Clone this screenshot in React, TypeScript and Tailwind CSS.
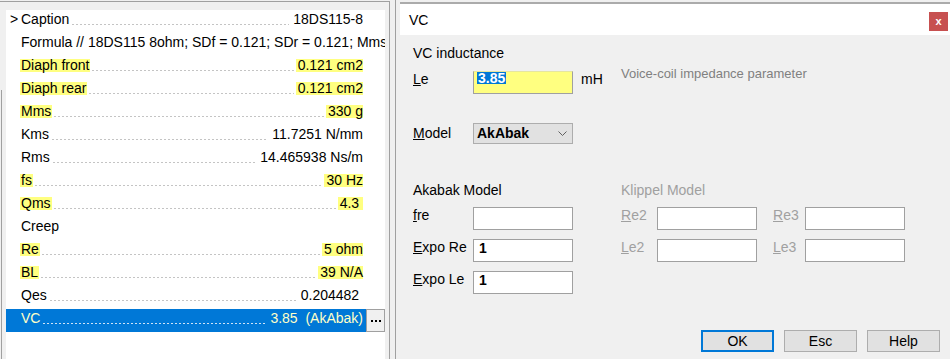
import React from 'react';

type Row = {
  label: string;
  value?: string;
  hl?: boolean;
  marker?: boolean;
  full?: boolean;
  sel?: boolean;
};

const rows: Row[] = [
  { label: 'Caption', value: '18DS115-8', marker: true },
  {
    label: 'Formula // 18DS115 8ohm; SDf = 0.121; SDr = 0.121; Mms = 330 g; Kms = 11.7251 N/mm',
    full: true,
  },
  { label: 'Diaph front', value: '0.121 cm2', hl: true },
  { label: 'Diaph rear', value: '0.121 cm2', hl: true },
  { label: 'Mms', value: '330 g', hl: true },
  { label: 'Kms', value: '11.7251 N/mm' },
  { label: 'Rms', value: '14.465938 Ns/m' },
  { label: 'fs', value: '30 Hz', hl: true },
  { label: 'Qms', value: '4.3\u00a0', hl: true },
  { label: 'Creep', full: true },
  { label: 'Re', value: '5 ohm', hl: true },
  { label: 'BL', value: '39 N/A', hl: true },
  { label: 'Qes', value: '0.204482\u00a0' },
  { label: 'VC', value: '3.85\u00a0\u00a0(AkAbak)', sel: true },
];

function ListRow({ r }: { r: Row }) {
  return (
    <div className="flex h-[23px] w-[379px] shrink-0">
      <div
        className={
          'flex h-full w-[360px] shrink-0 items-start pl-[4px] pr-[3px] ' +
          (r.sel ? 'bg-[#0078d7] text-[#ffffc8]' : 'text-black')
        }
      >
        <span className="mt-[3px] h-[13px] w-[10px] shrink-0 leading-[13px]">{r.marker ? '>' : ''}</span>
        <span
          className={
            'mt-[3px] h-[13px] shrink-0 whitespace-nowrap px-px leading-[13px] ' + (r.hl ? 'bg-[#ffff80]' : '')
          }
        >
          {r.label}
        </span>
        {!r.full && (
          <>
            <span
              className={
                'mx-[2px] mt-[14px] h-px flex-1 bg-[length:4px_1px] bg-repeat-x ' +
                (r.sel
                  ? 'bg-[image:linear-gradient(to_right,#cfe2f5_50%,transparent_50%)]'
                  : 'bg-[image:linear-gradient(to_right,#c4c4c4_50%,transparent_50%)]')
              }
            />
            <span
              className={
                'mt-[3px] h-[13px] shrink-0 whitespace-nowrap pl-[2px] leading-[13px] ' +
                (r.hl ? 'bg-[#ffff80]' : '')
              }
            >
              {r.value}
            </span>
          </>
        )}
      </div>
      {r.sel && (
        <div className="flex h-full w-[19px] shrink-0 items-center justify-center gap-[2px] border border-[#a0a0a0] bg-[#f0f0f0]">
          <span className="h-[2px] w-[2px] bg-black" />
          <span className="h-[2px] w-[2px] bg-black" />
          <span className="h-[2px] w-[2px] bg-black" />
        </div>
      )}
    </div>
  );
}

function Field({ children, w = 'w-[100px]' }: { children?: React.ReactNode; w?: string }) {
  return (
    <div
      className={
        w +
        ' flex h-[23px] shrink-0 items-start border border-[#a0a0a0] bg-white pl-[5px] pt-px font-bold leading-[15px]'
      }
    >
      {children}
    </div>
  );
}

function Lbl({ children, w, gray }: { children: React.ReactNode; w: string; gray?: boolean }) {
  return (
    <div className={w + ' shrink-0 leading-[17px] ' + (gray ? 'text-[#a0a0a0]' : 'text-black')}>{children}</div>
  );
}

function Btn({ children, def }: { children: React.ReactNode; def?: boolean }) {
  return (
    <div
      className={
        'flex h-[22px] w-[73px] items-center justify-center bg-[#e1e1e1] leading-[17px] ' +
        (def ? 'border-2 border-[#0078d7]' : 'border border-[#adadad]')
      }
    >
      {children}
    </div>
  );
}

export default function App() {
  return (
    <div className="flex h-[359px] w-[950px] overflow-hidden bg-[#f0f0f0] font-['Liberation_Sans',Arial,sans-serif] text-[14px] text-black">
      {/* left property list */}
      <div className="flex h-full w-[390px] shrink-0 flex-col pt-px">
        <div className="flex min-h-0 flex-1 border-t border-r border-[#a0a0a0]">
          <div className="flex w-[6px] shrink-0 flex-col">
            <div className="h-[88px]" />
            <div className="ml-px flex-1 border-l border-[#a0a0a0]" />
          </div>
          <div className="mt-[8px] flex w-[379px] shrink-0 flex-col overflow-hidden bg-white">
            {rows.map((r, i) => (
              <ListRow key={i} r={r} />
            ))}
          </div>
        </div>
      </div>
      <div className="w-[5px] shrink-0" />
      <div className="w-px shrink-0 bg-[#a0a0a0]" />
      <div className="w-[4px] shrink-0" />

      {/* dialog */}
      <div className="flex min-w-0 flex-1 flex-col pt-[2px]">
        <div className="h-[2px] bg-[#ababab]" />
        <div className="flex h-[31px] shrink-0 items-start bg-white">
          <span className="ml-[9px] mt-[8px] leading-[17px]">VC</span>
          <div className="ml-auto mr-[2px] mt-[8px] flex h-[19px] w-[19px] items-center justify-center bg-[#c75050] pb-px text-[11px] font-bold leading-none text-white">
            x
          </div>
        </div>
        <div className="flex flex-1 flex-col bg-[#f0f0f0] pl-[13px] pt-[10px]">
          <div className="leading-[17px]">VC inductance</div>

          {/* Le row */}
          <div className="mt-[4px] flex items-start">
            <div className="mt-[4.5px] w-[60px] shrink-0 leading-[17px]">
              <span className="underline">L</span>e
            </div>
            <div className="mt-[5px] flex h-[23px] w-[100px] shrink-0 items-start border border-[#a0a0a0] border-t-[#e6e6a0] bg-[#ffff80] pl-[3px]">
              <span className="h-[12px] bg-[#0078d7] px-px font-bold leading-[12px] text-white">3.85</span>
            </div>
            <div className="mt-[4.5px] w-[48px] shrink-0 pl-[8px] leading-[17px]">mH</div>
            <div className="text-[13px] leading-[16px] text-[#808080]">Voice-coil impedance parameter</div>
          </div>

          {/* Model row */}
          <div className="mt-[29px] flex h-[21px] items-center">
            <div className="w-[60px] shrink-0 leading-[17px]">
              <span className="underline">M</span>odel
            </div>
            <div className="flex h-[21px] w-[100px] items-center border border-[#adadad] bg-[#e1e1e1] pl-[3px]">
              <span className="font-bold leading-[17px]">AkAbak</span>
              <svg className="ml-auto mr-[5px]" width="9" height="5" viewBox="0 0 9 5">
                <path d="M0.5 0.5 L4.5 4.5 L8.5 0.5" fill="none" stroke="#606060" strokeWidth="1" />
              </svg>
            </div>
          </div>

          {/* model headings */}
          <div className="mt-[38px] flex leading-[17px]">
            <div className="w-[208px] shrink-0">Akabak Model</div>
            <div className="text-[#a0a0a0]">Klippel Model</div>
          </div>

          <div className="mt-[8px] flex items-start">
            <Lbl w="w-[60px]">
              <span className="underline">f</span>re
            </Lbl>
            <Field />
            <div className="w-[48px] shrink-0" />
            <Lbl w="w-[36px]" gray>
              <span className="underline">R</span>e2
            </Lbl>
            <Field />
            <div className="w-[16px] shrink-0" />
            <Lbl w="w-[32px]" gray>
              <span className="underline">R</span>e3
            </Lbl>
            <Field />
          </div>

          <div className="mt-[9px] flex items-start">
            <Lbl w="w-[60px]">
              <span className="underline">E</span>xpo Re
            </Lbl>
            <Field>1</Field>
            <div className="w-[48px] shrink-0" />
            <Lbl w="w-[36px]" gray>
              <span className="underline">L</span>e2
            </Lbl>
            <Field />
            <div className="w-[16px] shrink-0" />
            <Lbl w="w-[32px]" gray>
              <span className="underline">L</span>e3
            </Lbl>
            <Field />
          </div>

          <div className="mt-[9px] flex items-start">
            <Lbl w="w-[60px]">
              <span className="underline">E</span>xpo Le
            </Lbl>
            <Field>1</Field>
          </div>

          <div className="mt-[36px] flex justify-end gap-[10px] pr-[10px]">
            <Btn def>OK</Btn>
            <Btn>Esc</Btn>
            <Btn>Help</Btn>
          </div>
        </div>
      </div>
    </div>
  );
}
